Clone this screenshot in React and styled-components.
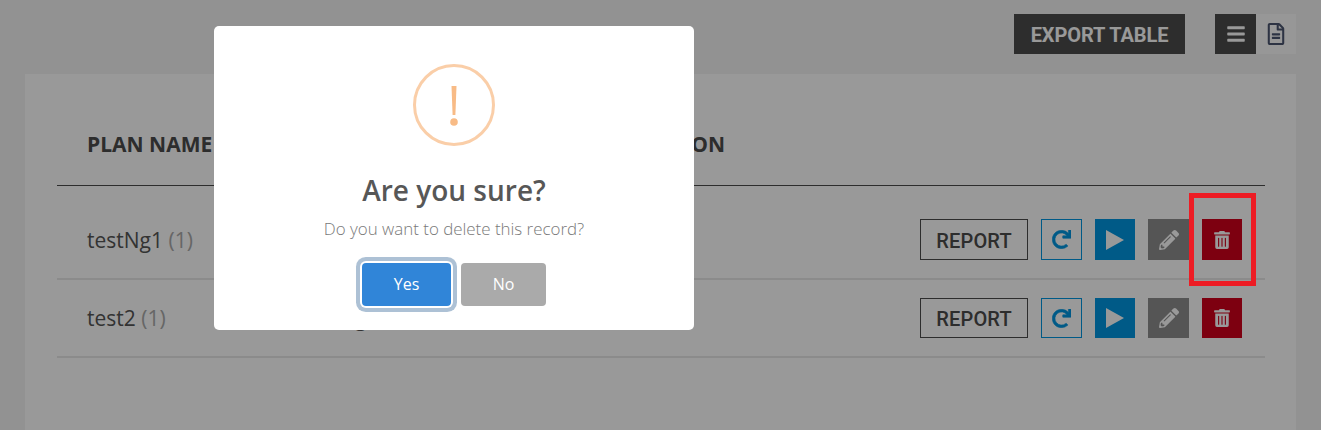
import styled, { createGlobalStyle } from "styled-components";
import { FaBars, FaRegFileAlt, FaRedo, FaPencilAlt, FaTrashAlt } from "react-icons/fa";

const GlobalStyle = createGlobalStyle`
  html, body {
    margin: 0;
    height: 100%;
    overflow: hidden;
    background: #f3f3f3;
    font-family: "Open Sans", "Liberation Sans", sans-serif;
  }
  * {
    box-sizing: border-box;
  }
`;

const Page = styled.div`
  height: 430px;
  overflow: hidden;
  padding: 14px 25px 0;
`;

const Toolbar = styled.div`
  display: flex;
  justify-content: flex-end;
  height: 40px;
  margin-bottom: 20px;
`;

const ExportButton = styled.button`
  width: 171px;
  height: 40px;
  margin-right: 30px;
  padding: 1px 0 0;
  border: none;
  background: #4b4b4b;
  color: #fff;
  font-family: Roboto, sans-serif;
  font-size: 20px;
  font-weight: 700;
  letter-spacing: -0.1px;
`;

const ViewButton = styled.button`
  display: flex;
  align-items: center;
  justify-content: center;
  width: ${(p) => (p.$active ? "41px" : "40px")};
  height: 40px;
  padding: 0;
  border: none;
  background: ${(p) => (p.$active ? "#4b4b4b" : "#fcfcfc")};
  color: ${(p) => (p.$active ? "#fff" : "#4b5570")};
  font-size: ${(p) => (p.$active ? "20px" : "22px")};
`;

const Card = styled.section`
  height: 400px;
  padding: 0 31px 0 32px;
  background: #fff;
`;

const Row = styled.div`
  display: grid;
  grid-template-columns: 213px 286px 1fr auto;
  align-items: center;
  padding: ${(p) => p.$padding};
  padding-left: 30px;
  padding-right: 23px;
  border-bottom: ${(p) => (p.$head ? "1px solid #4b4b4b" : "2px solid #e8e8e8")};
`;

const HeadCell = styled.div`
  font-size: 21px;
  font-weight: 700;
  line-height: 24px;
  color: #4b4b4b;
  white-space: nowrap;
`;

const Cell = styled.div`
  font-size: 21px;
  line-height: 24px;
  color: #555;
  white-space: nowrap;
`;

const Count = styled.span`
  color: #aaa;
`;

const Actions = styled.div`
  display: flex;
  gap: 13px;
`;

const ReportButton = styled.button`
  width: 108px;
  height: ${(p) => p.$height}px;
  padding: 2px 0 0;
  border: 1px solid #4b4b4b;
  background: transparent;
  color: #4b4b4b;
  font-family: Roboto, sans-serif;
  font-size: 20px;
  font-weight: 500;
  letter-spacing: 0.2px;
`;

const IconButton = styled.button`
  display: flex;
  align-items: center;
  justify-content: center;
  width: ${(p) => p.$width}px;
  height: ${(p) => p.$height}px;
  padding: 0;
  border: ${(p) => (p.$outline ? `1px solid ${p.$color}` : "none")};
  background: ${(p) => (p.$outline ? "transparent" : p.$color)};
  color: ${(p) => (p.$outline ? p.$color : "#fff")};
  font-size: 20px;
`;

const TrashWrap = styled.div`
  position: relative;
`;

const Annotation = styled.div`
  position: absolute;
  left: -13px;
  top: -26px;
  z-index: 20;
  width: 67px;
  height: 93px;
  border: 5px solid #ed1c24;
`;

const Overlay = styled.div`
  position: fixed;
  inset: 0;
  z-index: 10;
  background: rgba(0, 0, 0, 0.4);
`;

const Modal = styled.div`
  position: absolute;
  left: 214px;
  top: 26px;
  display: flex;
  flex-direction: column;
  align-items: center;
  width: 480px;
  height: 304px;
  padding-top: 38px;
  border-radius: 5px;
  background: #fff;
`;

const WarningCircle = styled.div`
  display: flex;
  flex-direction: column;
  align-items: center;
  width: 82px;
  height: 82px;
  border: 3px solid #facea8;
  border-radius: 50%;
`;

const Title = styled.h2`
  margin: 27px 0 0;
  font-size: 28px;
  font-weight: 600;
  line-height: 34px;
  color: #575757;
`;

const Message = styled.p`
  margin: 11px 0 0;
  font-size: 16.9px;
  font-weight: 300;
  line-height: 22px;
  color: #797979;
`;

const ButtonRow = styled.div`
  display: flex;
  gap: 10px;
  margin-top: 23px;
`;

const ConfirmButton = styled.button`
  width: ${(p) => p.$width}px;
  height: 43px;
  padding: 0 0 2px;
  border: none;
  border-radius: 4px;
  background: ${(p) => p.$bg};
  box-shadow: ${(p) => (p.$focus ? "0 0 0 2px #fff, 0 0 0 6px rgba(50, 100, 150, 0.4)" : "none")};
  color: #fff;
  font-family: "Open Sans", sans-serif;
  font-size: 16px;
`;

function WarningMark() {
  return (
    <svg width="12" height="48" viewBox="0 0 12 48" style={{ marginTop: 19 }}>
      <path d="M3.5 0h5L7.4 29H4.6z" fill="#f8bb86" />
      <circle cx="6" cy="36" r="3.8" fill="#f8bb86" />
    </svg>
  );
}

function PlayIcon() {
  return (
    <svg width="18" height="20" viewBox="0 0 18 20">
      <path d="M0 0l18 10L0 20z" fill="#fff" />
    </svg>
  );
}

function RowActions({ height, annotate }) {
  return (
    <Actions>
      <ReportButton $height={height}>REPORT</ReportButton>
      <IconButton $outline $color="#0096e1" $width={41} $height={height}>
        <FaRedo size={19} stroke="currentColor" strokeWidth={15} />
      </IconButton>
      <IconButton $color="#0096e1" $width={40} $height={height}>
        <PlayIcon />
      </IconButton>
      <IconButton $color="#8e8e8e" $width={41} $height={height}>
        <FaPencilAlt size={20} />
      </IconButton>
      <TrashWrap>
        <IconButton $color="#d0001b" $width={40} $height={height}>
          <FaTrashAlt size={18} />
        </IconButton>
        {annotate && <Annotation />}
      </TrashWrap>
    </Actions>
  );
}

export default function App() {
  return (
    <>
      <GlobalStyle />
      <Page>
        <Toolbar>
          <ExportButton>EXPORT TABLE</ExportButton>
          <ViewButton $active>
            <FaBars />
          </ViewButton>
          <ViewButton>
            <FaRegFileAlt />
          </ViewButton>
        </Toolbar>
        <Card>
          <Row $head $padding="58px 0 29px">
            <HeadCell>PLAN NAME</HeadCell>
            <HeadCell>TEST TYPE</HeadCell>
            <HeadCell>DESCRIPTION</HeadCell>
            <span />
          </Row>
          <Row $padding="33px 0 18px">
            <Cell>
              testNg1 <Count>(1)</Count>
            </Cell>
            <Cell />
            <Cell />
            <RowActions height={41} annotate />
          </Row>
          <Row $padding="18px 0">
            <Cell>
              test2 <Count>(1)</Count>
            </Cell>
            <Cell>testing</Cell>
            <Cell />
            <RowActions height={40} />
          </Row>
        </Card>
      </Page>
      <Overlay>
        <Modal>
          <WarningCircle>
            <WarningMark />
          </WarningCircle>
          <Title>Are you sure?</Title>
          <Message>Do you want to delete this record?</Message>
          <ButtonRow>
            <ConfirmButton $width={89} $bg="#3085d8" $focus>
              Yes
            </ConfirmButton>
            <ConfirmButton $width={85} $bg="#aaa">
              No
            </ConfirmButton>
          </ButtonRow>
        </Modal>
      </Overlay>
    </>
  );
}
